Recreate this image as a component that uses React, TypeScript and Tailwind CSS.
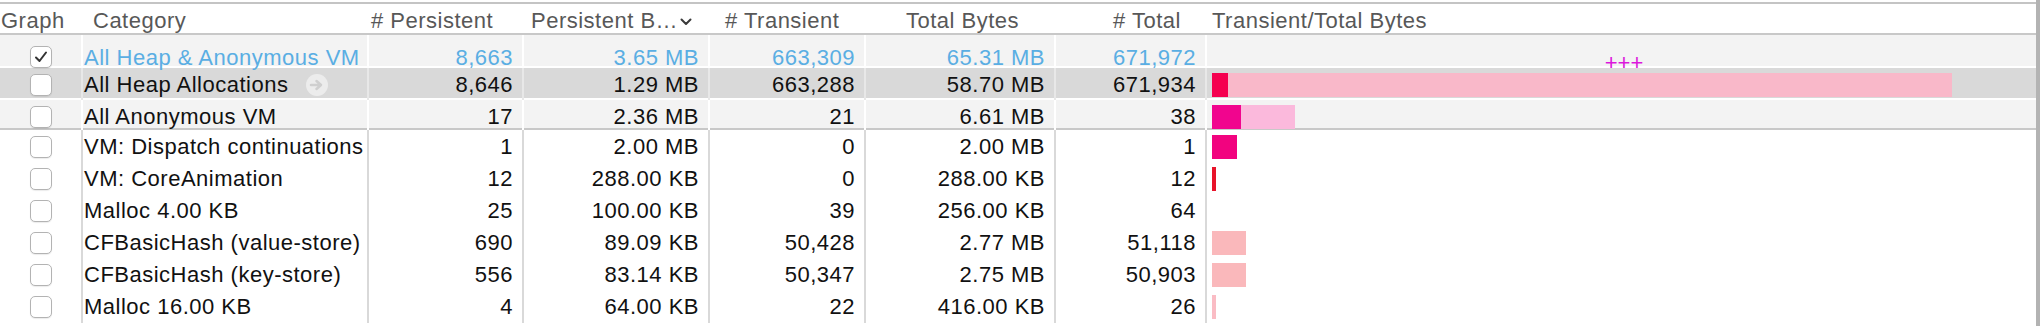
import React from 'react';

type Variant = 'summary' | 'selected' | 'group' | 'plain';

interface Bar {
  width: number;
  color: string;
}

interface AllocRow {
  name: string;
  persistent: string;
  persistentBytes: string;
  transient: string;
  totalBytes: string;
  total: string;
  variant: Variant;
  checked?: boolean;
  arrow?: boolean;
  plus?: boolean;
  bars?: Bar[];
}

const rows: AllocRow[] = [
  { name: 'All Heap & Anonymous VM', persistent: '8,663', persistentBytes: '3.65 MB', transient: '663,309', totalBytes: '65.31 MB', total: '671,972', variant: 'summary', checked: true, plus: true },
  { name: 'All Heap Allocations', persistent: '8,646', persistentBytes: '1.29 MB', transient: '663,288', totalBytes: '58.70 MB', total: '671,934', variant: 'selected', arrow: true, bars: [{ width: 16, color: 'bg-[#f5004f]' }, { width: 724, color: 'bg-[#f9b8c9]' }] },
  { name: 'All Anonymous VM', persistent: '17', persistentBytes: '2.36 MB', transient: '21', totalBytes: '6.61 MB', total: '38', variant: 'group', bars: [{ width: 29, color: 'bg-[#f1058e]' }, { width: 54, color: 'bg-[#fbb9dc]' }] },
  { name: 'VM: Dispatch continuations', persistent: '1', persistentBytes: '2.00 MB', transient: '0', totalBytes: '2.00 MB', total: '1', variant: 'plain', bars: [{ width: 25, color: 'bg-[#f2037f]' }] },
  { name: 'VM: CoreAnimation', persistent: '12', persistentBytes: '288.00 KB', transient: '0', totalBytes: '288.00 KB', total: '12', variant: 'plain', bars: [{ width: 4, color: 'bg-[#e8132a]' }] },
  { name: 'Malloc 4.00 KB', persistent: '25', persistentBytes: '100.00 KB', transient: '39', totalBytes: '256.00 KB', total: '64', variant: 'plain' },
  { name: 'CFBasicHash (value-store)', persistent: '690', persistentBytes: '89.09 KB', transient: '50,428', totalBytes: '2.77 MB', total: '51,118', variant: 'plain', bars: [{ width: 34, color: 'bg-[#fab8bb]' }] },
  { name: 'CFBasicHash (key-store)', persistent: '556', persistentBytes: '83.14 KB', transient: '50,347', totalBytes: '2.75 MB', total: '50,903', variant: 'plain', bars: [{ width: 34, color: 'bg-[#fab8bb]' }] },
  { name: 'Malloc 16.00 KB', persistent: '4', persistentBytes: '64.00 KB', transient: '22', totalBytes: '416.00 KB', total: '26', variant: 'plain', bars: [{ width: 4, color: 'bg-[#fabcc4]' }] },
];

const cols = 'grid grid-cols-[81px_286px_155px_186px_156px_190px_151px_831px]';

const rowStyle: Record<Variant, string> = {
  summary: 'h-[31px] bg-[#f3f3f3] text-[#5aaee3]',
  selected: 'h-[30px] mt-[2px] bg-[#d9d9d9] text-[#111]',
  group: 'h-[30px] mt-[2px] bg-[#f3f3f3] text-[#111] border-b-2 border-[#c8c8c8]',
  plain: 'h-[32px] bg-white text-[#111]',
};

const dividerStyle: Record<Variant, string> = {
  summary: 'border-white',
  selected: 'border-[#e8e8e8]',
  group: 'border-white',
  plain: 'border-[#d9d9d9]',
};

const Checkbox: React.FC<{ checked?: boolean }> = ({ checked }) => (
  <div className="w-[22px] h-[22px] rounded-[5px] border border-[#b3b3b3] bg-white shadow-[0_1px_1px_rgba(0,0,0,0.08)] flex items-center justify-center">
    {checked && (
      <svg width="14" height="12" viewBox="0 0 14 12">
        <path d="M2 6.5 L5.5 10 L12 1.5" fill="none" stroke="#333" strokeWidth="2" strokeLinecap="round" strokeLinejoin="round" />
      </svg>
    )}
  </div>
);

const ArrowCircle: React.FC = () => (
  <svg width="22" height="22" viewBox="0 0 22 22" className="ml-[18px]">
    <circle cx="11" cy="11" r="11" fill="#ececec" />
    <path d="M5 11 H14 M10.5 7 L15 11 L10.5 15" fill="none" stroke="#cfcfcf" strokeWidth="2.5" strokeLinecap="round" strokeLinejoin="round" />
  </svg>
);

const App: React.FC = () => {
  return (
    <div className="w-[2040px] h-[326px] overflow-hidden bg-white pt-[2px] font-['Liberation_Sans',Arial,sans-serif] text-[22px] tracking-[0.5px] border-r-4 border-[#b3b3b3]">
      <div className={`${cols} h-[33px] border-t-2 border-b-2 border-t-[#c4c4c4] border-b-[#c8c8c8] text-[#585858] items-center`}>
        <div className="pl-[1px]">Graph</div>
        <div className="pl-[12px]">Category</div>
        <div className="pl-[4px]"># Persistent</div>
        <div className="pl-[9px] flex items-center whitespace-nowrap">
          Persistent B…
          <svg width="12" height="8" viewBox="0 0 12 8" className="ml-[2px] mt-[3px]">
            <path d="M1.5 1.5 L6 6 L10.5 1.5" fill="none" stroke="#3a3a3a" strokeWidth="2" strokeLinecap="round" strokeLinejoin="round" />
          </svg>
        </div>
        <div className="pl-[17px]"># Transient</div>
        <div className="pl-[42px]">Total Bytes</div>
        <div className="pl-[59px]"># Total</div>
        <div className="pl-[7px]">Transient/Total Bytes</div>
      </div>

      {rows.map(row => {
        const div = `border-l-2 ${dividerStyle[row.variant]}`;
        const num = `${div} flex items-center justify-end pr-[9px] whitespace-nowrap`;
        return (
          <div key={row.name} className={`${cols} ${rowStyle[row.variant]}`}>
            <div className="flex items-center justify-center">
              <Checkbox checked={row.checked} />
            </div>
            <div className={`${div} flex items-center pl-[1px] whitespace-nowrap`}>
              {row.name}
              {row.arrow && <ArrowCircle />}
            </div>
            <div className={num}>{row.persistent}</div>
            <div className={num}>{row.persistentBytes}</div>
            <div className={num}>{row.transient}</div>
            <div className={num}>{row.totalBytes}</div>
            <div className={num}>{row.total}</div>
            <div className={`${div} flex items-center pl-[5px]`}>
              {row.plus && (
                <div className="w-full flex justify-center pt-[11px] text-[#dc18dc] tracking-normal">+++</div>
              )}
              {row.bars && (
                <div className="flex h-[24px]">
                  {row.bars.map((bar, i) => (
                    <div key={i} className={`h-full ${bar.color}`} style={{ width: bar.width }} />
                  ))}
                </div>
              )}
            </div>
          </div>
        );
      })}
    </div>
  );
};

export default App;
